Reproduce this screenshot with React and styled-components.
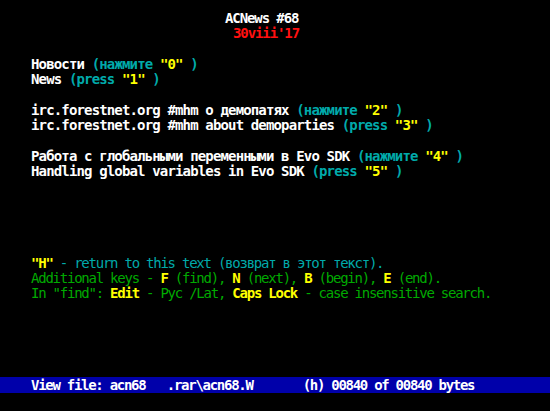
import React from "react";
import styled, { createGlobalStyle } from "styled-components";

const ROW = 15.29;

const colors = {
  white: "#ffffff",
  red: "#ff1010",
  cyan: "#00aaaa",
  yellow: "#ffff00",
  green: "#00aa00",
  blue: "#0000aa",
};

const Global = createGlobalStyle`
  html, body { margin: 0; padding: 0; background: #000; }
  body { width: 550px; height: 411px; overflow: hidden; }
`;

const Screen = styled.div`
  width: 550px;
  height: 411px;
  box-sizing: border-box;
  background: #000;
  padding-top: 11px;
  display: flex;
  flex-direction: column;
  font-family: "DejaVu Sans Mono", "Liberation Mono", monospace;
  font-size: 14px;
  overflow: hidden;
`;

const Block = styled.div`
  display: flex;
  flex-direction: column;
  padding-left: 31px;
  margin-bottom: ${(p) => (p.$gapRows || 0) * ROW}px;
`;

const spacing = { normal: "-0.85px", tight: "-1.24px", title: "-1.1px" };

const Line = styled.div`
  height: ${ROW}px;
  line-height: ${ROW}px;
  white-space: pre;
  color: ${(p) => p.$color || colors.white};
  font-weight: bold;
  letter-spacing: ${(p) => spacing[p.$spacing || "normal"]};
  padding-left: ${(p) => p.$indent || 0}px;
`;

const C = styled.span`
  color: ${(p) => colors[p.$c]};
  font-weight: ${(p) => (p.$thin ? "normal" : "bold")};
`;

const StatusBar = styled.div`
  margin-top: ${5 * ROW - 1}px;
  height: 16px;
  line-height: 16px;
  background: ${colors.blue};
  color: ${colors.white};
  font-weight: bold;
  white-space: pre;
  letter-spacing: -1.28px;
  padding-left: 31px;
`;

const Hint = ({ word, num }) => (
  <>
    <C $c="cyan">({word} </C>
    <C $c="yellow">"{num}"</C>
    <C $c="cyan"> )</C>
  </>
);

export default function App() {
  return (
    <>
      <Global />
      <Screen>
        <Block $gapRows={1}>
          <Line $indent={194} $spacing="title">ACNews #68</Line>
          <Line $indent={202} $spacing="title" $color={colors.red}>30viii'17</Line>
        </Block>
        <Block $gapRows={1}>
          <Line>Новости <Hint word="нажмите" num="0" /></Line>
          <Line>News <Hint word="press" num="1" /></Line>
        </Block>
        <Block $gapRows={1}>
          <Line>irc.forestnet.org #mhm о демопатях <Hint word="нажмите" num="2" /></Line>
          <Line>irc.forestnet.org #mhm about demoparties <Hint word="press" num="3" /></Line>
        </Block>
        <Block $gapRows={5}>
          <Line>Работа с глобальными переменными в Evo SDK <Hint word="нажмите" num="4" /></Line>
          <Line>Handling global variables in Evo SDK <Hint word="press" num="5" /></Line>
        </Block>
        <Block>
          <Line $spacing="tight">
            <C $c="yellow">"H"</C>
            <C $c="cyan" $thin> - return to this text (возврат в этот текст).</C>
          </Line>
          <Line $spacing="tight">
            <C $c="green" $thin>Additional keys - </C>
            <C $c="yellow">F</C>
            <C $c="green" $thin> (find), </C>
            <C $c="yellow">N</C>
            <C $c="green" $thin> (next), </C>
            <C $c="yellow">B</C>
            <C $c="green" $thin> (begin), </C>
            <C $c="yellow">E</C>
            <C $c="green" $thin> (end).</C>
          </Line>
          <Line $spacing="tight">
            <C $c="green" $thin>In "find": </C>
            <C $c="yellow">Edit</C>
            <C $c="green" $thin> - Рус /Lat, </C>
            <C $c="yellow">Caps Lock</C>
            <C $c="green" $thin> - case insensitive search.</C>
          </Line>
        </Block>
        <StatusBar>View file: acn68   .rar\acn68.W       (h) 00840 of 00840 bytes</StatusBar>
      </Screen>
    </>
  );
}
